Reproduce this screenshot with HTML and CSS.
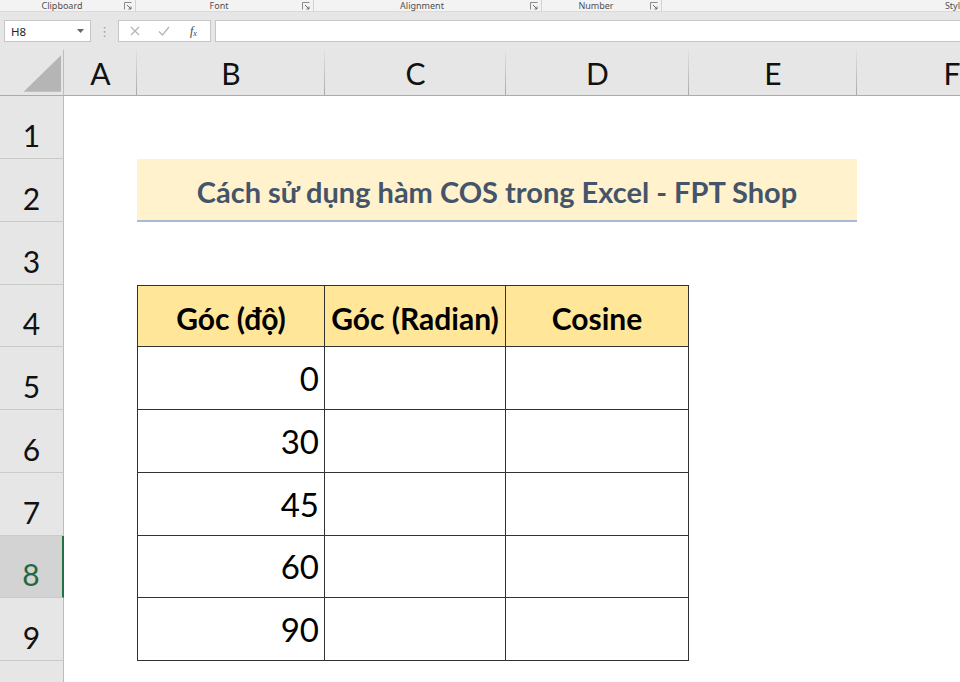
FILE: index.html
```html
<!DOCTYPE html>
<html lang="vi">
<head>
<meta charset="utf-8">
<title>COS Excel</title>
<link rel="stylesheet" href="styles.css">
</head>
<body>
<div class="app">
  <div class="ribbon">
    <div class="grp g1"><span class="lbl">Clipboard</span><svg class="launch" width="8" height="8" viewBox="0 0 8 8"><path d="M0.5 7.5V0.5H7.5" fill="none" stroke="#8a8a8a"/><path d="M3 3L7 7M7 4.5V7H4.5" fill="none" stroke="#6a6a6a"/></svg></div>
    <div class="grp g2"><span class="lbl">Font</span><svg class="launch" width="8" height="8" viewBox="0 0 8 8"><path d="M0.5 7.5V0.5H7.5" fill="none" stroke="#8a8a8a"/><path d="M3 3L7 7M7 4.5V7H4.5" fill="none" stroke="#6a6a6a"/></svg></div>
    <div class="grp g3"><span class="lbl">Alignment</span><svg class="launch" width="8" height="8" viewBox="0 0 8 8"><path d="M0.5 7.5V0.5H7.5" fill="none" stroke="#8a8a8a"/><path d="M3 3L7 7M7 4.5V7H4.5" fill="none" stroke="#6a6a6a"/></svg></div>
    <div class="grp g4"><span class="lbl">Number</span><svg class="launch" width="8" height="8" viewBox="0 0 8 8"><path d="M0.5 7.5V0.5H7.5" fill="none" stroke="#8a8a8a"/><path d="M3 3L7 7M7 4.5V7H4.5" fill="none" stroke="#6a6a6a"/></svg></div>
    <div class="grp g5"><span class="lbl">Styl</span></div>
  </div>
  <div class="fbar">
    <div class="namebox"><span class="ref">H8</span><svg width="7" height="4" viewBox="0 0 7 4"><path d="M0 0H7L3.5 4Z" fill="#666"/></svg></div>
    <div class="dots">⋮</div>
    <div class="fnbox">
      <svg class="ico" width="10" height="10" viewBox="0 0 10 10"><path d="M1 1L9 9M9 1L1 9" stroke="#b4b4b4" stroke-width="1.2" fill="none"/></svg>
      <svg class="ico" width="12" height="10" viewBox="0 0 12 10"><path d="M1 5.5L4.5 9L11 1" stroke="#b4b4b4" stroke-width="1.2" fill="none"/></svg>
      <span class="fx">f<sub>x</sub></span>
    </div>
    <div class="finput"></div>
  </div>
  <div class="sheet">
    <div class="corner"><svg width="64" height="45" viewBox="0 0 64 45"><path d="M24 42H62V5Z" fill="#b5b5b5"/></svg></div>
    <div class="ch">A</div><div class="ch">B</div><div class="ch">C</div><div class="ch">D</div><div class="ch">E</div><div class="ch">F</div>

    <div class="rh">1</div><div class="c"></div><div class="c"></div><div class="c"></div><div class="c"></div><div class="c"></div><div class="c"></div>

    <div class="rh">2</div><div class="c"></div><div class="title">Cách sử dụng hàm COS trong Excel - FPT Shop</div><div class="c"></div>

    <div class="rh">3</div><div class="c"></div><div class="c"></div><div class="c"></div><div class="c"></div><div class="c"></div><div class="c"></div>

    <div class="rh">4</div><div class="c"></div><div class="th first">Góc (độ)</div><div class="th">Góc (Radian)</div><div class="th">Cosine</div><div class="c"></div><div class="c"></div>

    <div class="rh">5</div><div class="c"></div><div class="td first">0</div><div class="td"></div><div class="td"></div><div class="c"></div><div class="c"></div>
    <div class="rh">6</div><div class="c"></div><div class="td first">30</div><div class="td"></div><div class="td"></div><div class="c"></div><div class="c"></div>
    <div class="rh">7</div><div class="c"></div><div class="td first">45</div><div class="td"></div><div class="td"></div><div class="c"></div><div class="c"></div>
    <div class="rh sel">8</div><div class="c"></div><div class="td first">60</div><div class="td"></div><div class="td"></div><div class="c"></div><div class="c"></div>
    <div class="rh">9</div><div class="c"></div><div class="td first">90</div><div class="td"></div><div class="td"></div><div class="c"></div><div class="c"></div>

    <div class="rh"></div><div class="c"></div><div class="c"></div><div class="c"></div><div class="c"></div><div class="c"></div><div class="c"></div>
  </div>
</div>
</body>
</html>
```

FILE: styles.css
```css
* { box-sizing: border-box; }
html, body { margin: 0; padding: 0; }
body {
  width: 960px;
  height: 682px;
  overflow: hidden;
  background: #ffffff;
  font-family: Lato, "Open Sans", sans-serif;
}
.app { width: 960px; height: 682px; overflow: hidden; }

/* ribbon group labels */
.ribbon {
  display: flex;
  height: 12px;
  background: #f3f3f3;
  border-bottom: 1px solid #dadada;
  font-family: "Noto Sans", sans-serif;
  font-size: 9px;
  color: #505050;
}
.grp {
  display: flex;
  align-items: center;
  height: 11px;
  border-right: 1px solid #d2d2d2;
  flex: none;
}
.lbl { flex: 1; text-align: center; line-height: 11px; white-space: nowrap; }
.launch { flex: none; margin-right: 3px; }
.g1 { width: 136px; }
.g2 { width: 178px; }
.g3 { width: 228px; }
.g4 { width: 120px; }
.g5 { flex: 1; border-right: none; justify-content: flex-end; }
.g5 .lbl { flex: none; }

/* formula bar */
.fbar {
  display: flex;
  align-items: center;
  height: 38px;
  padding: 8px 0 8px 4px;
  background: #e6e6e6;
}
.namebox {
  width: 87px;
  height: 22px;
  background: #fff;
  border: 1px solid #c6c6c6;
  display: flex;
  align-items: center;
  justify-content: space-between;
  padding: 0 6px 0 6px;
  font-family: "Noto Sans", sans-serif;
  font-size: 11.5px;
  color: #222;
}
.dots {
  width: 27px;
  text-align: center;
  color: #a0a0a0;
  font-size: 13px;
  font-family: "DejaVu Sans", sans-serif;
}
.fnbox {
  width: 93px;
  height: 22px;
  background: #fff;
  border: 1px solid #c6c6c6;
  display: flex;
  align-items: center;
  padding-left: 11px;
  gap: 18px;
}
.fx {
  font-family: "Liberation Serif", serif;
  font-style: italic;
  font-size: 12px;
  color: #444;
  margin-left: 2px;
}
.fx sub { font-size: 8px; vertical-align: -1px; }
.finput {
  flex: 1;
  height: 22px;
  margin-left: 4px;
  background: #fff;
  border: 1px solid #c6c6c6;
  border-right: none;
}

/* sheet grid */
.sheet {
  display: grid;
  grid-template-columns: 64px 73px 188px 181px 183px 168px 190px;
  grid-template-rows: 46px 63px 63px 63px 62px 63px 63px 63px 62px 63px 40px;
  background: #fff;
}
.corner {
  background: #e6e6e6;
  border-right: 1px solid #bdbdbd;
  border-bottom: 1px solid #ababab;
  display: flex;
}
.corner svg { display: block; }
.ch {
  background-color: #e6e6e6;
  background-image: linear-gradient(#e2e2e2, #a9a9a9);
  background-size: 1px 100%;
  background-position: right top;
  background-repeat: no-repeat;
  border-bottom: 1px solid #ababab;
  display: flex;
  align-items: flex-end;
  justify-content: center;
  font-size: 30px;
  line-height: 30px;
  padding-bottom: 7px;
  color: #111;
}
.rh {
  background: #e6e6e6;
  border-right: 1px solid #bcbcbc;
  border-bottom: 1px solid #cacaca;
  display: flex;
  align-items: flex-end;
  justify-content: center;
  font-size: 30px;
  line-height: 30px;
  padding-bottom: 8px;
  color: #111;
}
.rh.sel {
  background: #d3d3d3;
  color: #1d6b40;
  border-right: 2px solid #217346;
}
.c { background: #fff; }
.title {
  grid-column: span 4;
  background: #fff2cc;
  border-bottom: 2px solid #a7bbd8;
  display: flex;
  align-items: flex-end;
  justify-content: center;
  font-weight: 700;
  font-size: 29px;
  line-height: 29px;
  padding-bottom: 14px;
  color: #44546a;
  white-space: nowrap;
}
.th, .td {
  border-right: 1px solid #333;
  border-bottom: 1px solid #333;
  display: flex;
  align-items: flex-end;
}
.first { border-left: 1px solid #333; }
.th {
  background: #ffe699;
  border-top: 1px solid #333;
  justify-content: center;
  font-weight: 700;
  font-size: 30px;
  line-height: 30px;
  padding-bottom: 13px;
  color: #000;
  white-space: nowrap;
}
.td {
  background: #fff;
  justify-content: flex-end;
  padding-right: 5px;
  font-size: 33px;
  line-height: 33px;
  padding-bottom: 14px;
  color: #000;
}
```
